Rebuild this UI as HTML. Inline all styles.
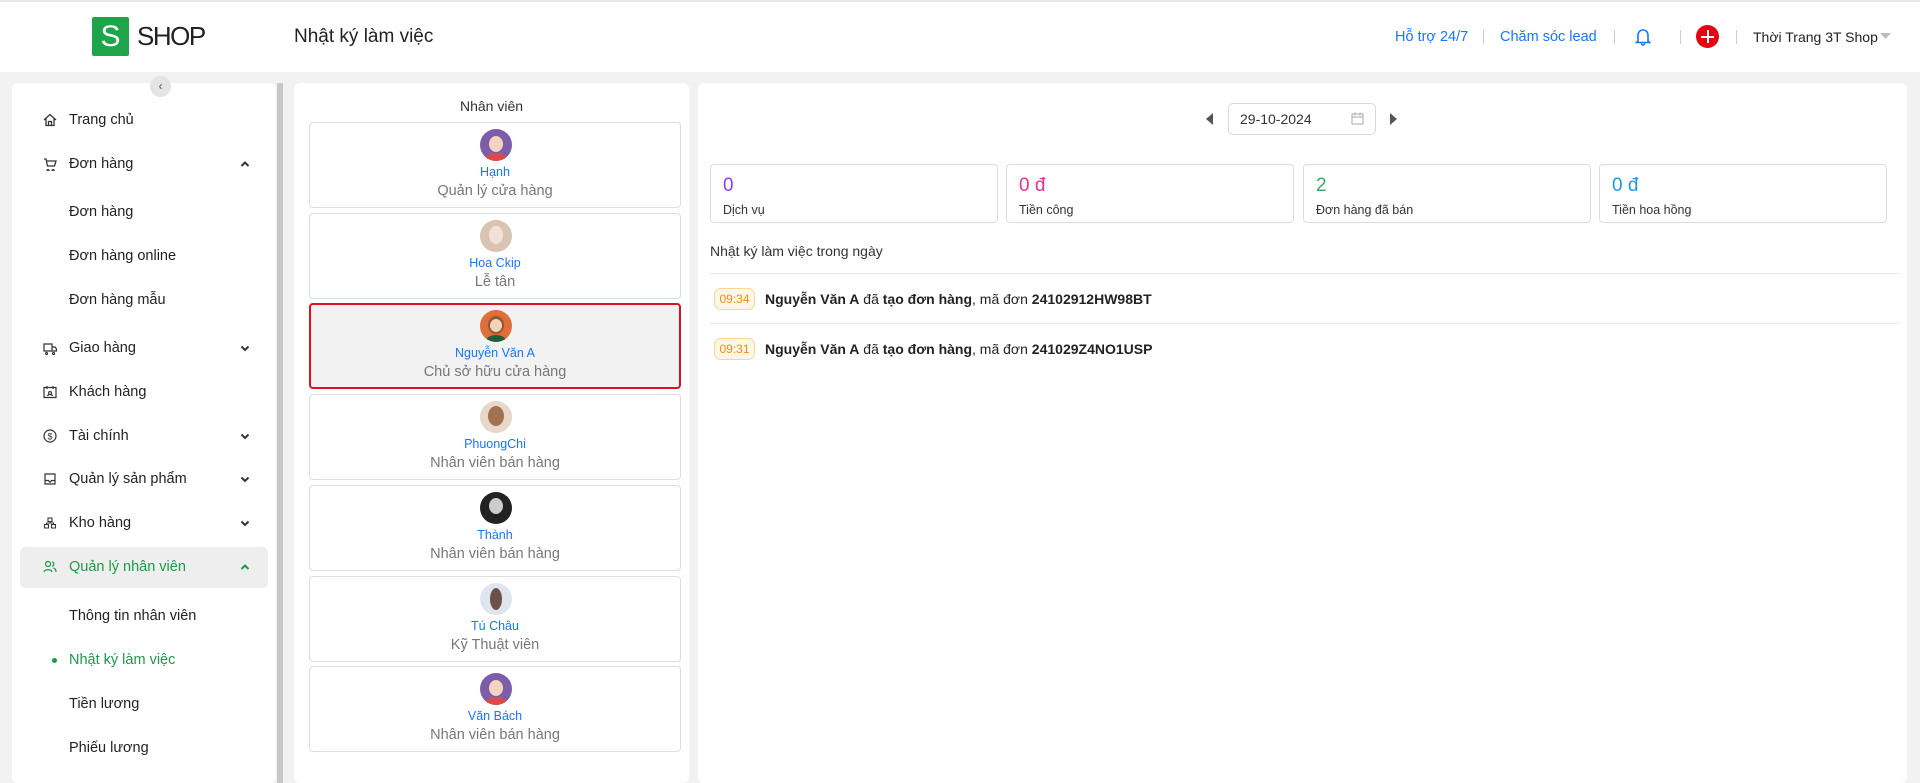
<!DOCTYPE html>
<html><head><meta charset="utf-8">
<style>
*{box-sizing:border-box;margin:0;padding:0}
body{width:1920px;height:763px;overflow:hidden;background:#f2f2f2;font-family:"Liberation Sans",sans-serif;color:#222;position:relative}
.abs{position:absolute}
.hdr{left:0;top:0;width:1920px;height:72px;background:#fff;border-top:2px solid #e8e8e8}
.logo{left:92px;top:17px;width:37px;height:39px;background:#1ea54a;border-radius:2px;color:#fff;font-size:30px;text-align:center;line-height:39px}
.shop{left:137px;top:21px;font-size:26px;color:#222;letter-spacing:-1.5px}
.title{left:294px;top:26px;font-size:19px;color:#222}
.hl{top:29px;font-size:14.5px;color:#1677ff}
.sep{top:30px;width:1px;height:14px;background:#ccc}
.side{left:12px;top:83px;width:264px;height:700px;background:#fff;border-radius:6px}
.sb{left:277px;top:83px;width:6px;height:700px;background:#c8c8c8}
.col{left:150px;top:76px;width:21px;height:21px;border-radius:50%;background:#e4e4e4;font-size:12px;text-align:center;line-height:20px;color:#555}
.mi{left:69px;font-size:14.5px;color:#222;transform:translateY(-50%)}
.ic{left:43px;width:14px;height:14px;transform:translateY(-50%)}
.chev{left:239px;width:12px;height:12px;transform:translateY(-50%)}
.mid{left:294px;top:83px;width:395px;height:700px;background:#fff;border-radius:6px}
.card{left:309px;width:372px;height:86px;border:1px solid #ddd;border-radius:4px;background:#fff;text-align:center}
.card.sel{border:2px solid #d9141c;background:#f2f2f2}
.av{position:absolute;left:170px;top:6px;width:32px;height:32px;border-radius:50%;overflow:hidden}
.nm{position:absolute;left:0;right:0;top:42px;font-size:12.5px;color:#1677ff}
.rl{position:absolute;left:0;right:0;top:60px;font-size:14.5px;color:#777}
.right{left:698px;top:83px;width:1209px;height:700px;background:#fff;border-radius:6px}
.stat{top:164px;width:288px;height:59px;border:1px solid #ddd;border-radius:4px;background:#fff}
.stat .v{position:absolute;left:12px;top:10px;font-size:19px}
.stat .l{position:absolute;left:12px;top:38px;font-size:12.5px;color:#333}
.badge{left:714px;width:41px;height:22px;border:1px solid #ffd591;background:#fff7e6;color:#fa8c16;border-radius:7px;font-size:12px;text-align:center;line-height:20px}
.ent{left:765px;font-size:14px;color:#222}
.hr{left:710px;width:1190px;height:1px;background:#e8e8e8}
</style></head><body>
<div class="abs hdr"></div>
<div class="abs logo">S</div>
<div class="abs shop">SHOP</div>
<div class="abs title">Nhật ký làm việc</div>
<div class="abs hl" style="left:1395px">Hỗ trợ 24/7</div>
<div class="abs sep" style="left:1483px"></div>
<div class="abs hl" style="left:1500px">Chăm sóc lead</div>
<div class="abs sep" style="left:1614px"></div>
<svg class="abs" style="left:1635px;top:27px" width="16" height="19" viewBox="0 0 16 19"><path d="M3 14V8a5 5 0 0 1 10 0v6l1.5 1.5h-13z M6.5 16.5a1.5 1.5 0 0 0 3 0" fill="none" stroke="#1677ff" stroke-width="1.6"/></svg>
<div class="abs sep" style="left:1680px"></div>
<div class="abs" style="left:1696px;top:25px;width:23px;height:23px;border-radius:50%;background:#e60012"></div>
<div class="abs" style="left:1701px;top:35.5px;width:13px;height:2px;background:#fff"></div>
<div class="abs" style="left:1706.5px;top:30px;width:2px;height:13px;background:#fff"></div>
<div class="abs sep" style="left:1736px"></div>
<div class="abs" style="left:1753px;top:29px;font-size:14px;color:#222">Thời Trang 3T Shop</div>
<svg class="abs" style="left:1880px;top:33px" width="11" height="7"><path d="M0 0h11L5.5 6z" fill="#bbb"/></svg>

<div class="abs side"></div>
<div class="abs sb"></div>
<div class="abs col">&#8249;</div>

<svg class="abs ic" style="top:120px" viewBox="0 0 14 14"><path d="M1 7L7 1.5 13 7M3 5.5V12.5h8V5.5M5.5 12.5v-4h3v4" fill="none" stroke="#333" stroke-width="1.3"/></svg>
<div class="abs mi" style="top:120px">Trang chủ</div>
<svg class="abs ic" style="top:164px" viewBox="0 0 14 14"><path d="M1 2h2l1.5 7h7L13 4H4M5 12.5a1 1 0 1 0 .1 0M10 12.5a1 1 0 1 0 .1 0" fill="none" stroke="#333" stroke-width="1.3"/></svg>
<div class="abs mi" style="top:164px">Đơn hàng</div>
<svg class="abs chev" style="top:164px" viewBox="0 0 12 12"><path d="M2.5 8L6 4.5 9.5 8" fill="none" stroke="#333" stroke-width="2"/></svg>
<div class="abs mi" style="top:212px">Đơn hàng</div>
<div class="abs mi" style="top:256px">Đơn hàng online</div>
<div class="abs mi" style="top:300px">Đơn hàng mẫu</div>
<svg class="abs ic" style="top:348px" viewBox="0 0 14 14"><path d="M1 3h8v7H1zM9 6h3l1.5 2v2H9M3.5 11.5a1 1 0 1 0 .1 0M10.5 11.5a1 1 0 1 0 .1 0" fill="none" stroke="#333" stroke-width="1.2"/></svg>
<div class="abs mi" style="top:348px">Giao hàng</div>
<svg class="abs chev" style="top:348px" viewBox="0 0 12 12"><path d="M2.5 4.5L6 8 9.5 4.5" fill="none" stroke="#333" stroke-width="2"/></svg>
<svg class="abs ic" style="top:392px" viewBox="0 0 14 14"><path d="M1 2.5h12v10H1zM4 1v3M10 1v3M7 6.5a1.5 1.5 0 1 0 .1 0M4.5 11c.5-2 4.5-2 5 0" fill="none" stroke="#333" stroke-width="1.2"/></svg>
<div class="abs mi" style="top:392px">Khách hàng</div>
<svg class="abs ic" style="top:436px" viewBox="0 0 14 14"><circle cx="7" cy="7" r="6" fill="none" stroke="#333" stroke-width="1.2"/><text x="7" y="10.5" font-size="9" text-anchor="middle" fill="#333" font-family="Liberation Sans">$</text></svg>
<div class="abs mi" style="top:436px">Tài chính</div>
<svg class="abs chev" style="top:436px" viewBox="0 0 12 12"><path d="M2.5 4.5L6 8 9.5 4.5" fill="none" stroke="#333" stroke-width="2"/></svg>
<svg class="abs ic" style="top:479px" viewBox="0 0 14 14"><path d="M2 2h10v10H2zM2 8.5h3.5l1 1.5h1l1-1.5H12" fill="none" stroke="#333" stroke-width="1.2"/></svg>
<div class="abs mi" style="top:479px">Quản lý sản phẩm</div>
<svg class="abs chev" style="top:479px" viewBox="0 0 12 12"><path d="M2.5 4.5L6 8 9.5 4.5" fill="none" stroke="#333" stroke-width="2"/></svg>
<svg class="abs ic" style="top:523px" viewBox="0 0 14 14"><path d="M5 2h4v3.5H5zM1.5 8.5h4V12h-4zM8.5 8.5h4V12h-4zM7 5.5v1.5M3.5 8.5V7h7v1.5" fill="none" stroke="#333" stroke-width="1.1"/></svg>
<div class="abs mi" style="top:523px">Kho hàng</div>
<svg class="abs chev" style="top:523px" viewBox="0 0 12 12"><path d="M2.5 4.5L6 8 9.5 4.5" fill="none" stroke="#333" stroke-width="2"/></svg>
<div class="abs" style="left:20px;top:547px;width:248px;height:41px;background:#eeeeee;border-radius:5px"></div>
<svg class="abs ic" style="top:567px" viewBox="0 0 14 14"><path d="M5 1.5a2.5 2.5 0 1 0 .1 0M1 12c.5-3 7.5-3 8 0M9 1.8a2.3 2.3 0 0 1 0 4.5M10.5 8c1.5.5 2.5 2 2.5 4" fill="none" stroke="#1a9a4a" stroke-width="1.2"/></svg>
<div class="abs mi" style="top:567px;color:#1a9a4a">Quản lý nhân viên</div>
<svg class="abs chev" style="top:567px" viewBox="0 0 12 12"><path d="M2.5 8L6 4.5 9.5 8" fill="none" stroke="#1a9a4a" stroke-width="2"/></svg>
<div class="abs mi" style="top:616px">Thông tin nhân viên</div>
<div class="abs" style="left:52px;top:658px;width:5px;height:5px;border-radius:50%;background:#1a9a4a"></div>
<div class="abs mi" style="top:660px;color:#1a9a4a">Nhật ký làm việc</div>
<div class="abs mi" style="top:704px">Tiền lương</div>
<div class="abs mi" style="top:748px">Phiếu lương</div>

<div class="abs mid"></div>
<div class="abs" style="left:294px;width:395px;top:98px;text-align:center;font-size:14px;color:#333">Nhân viên</div>

<div class="abs card" style="top:122px"><div class="av" style="background:#7b5ea7"><div style="position:absolute;left:9px;top:7px;width:14px;height:16px;border-radius:50%;background:#f6d3c0"></div><div style="position:absolute;left:5px;top:24px;width:22px;height:14px;border-radius:50%;background:#e04848"></div></div><div class="nm">Hạnh</div><div class="rl">Quản lý cửa hàng</div></div>
<div class="abs card" style="top:213px"><div class="av" style="background:#d9c3b3"><div style="position:absolute;left:9px;top:6px;width:14px;height:18px;border-radius:50%;background:#f3e1d5"></div></div><div class="nm">Hoa Ckip</div><div class="rl">Lễ tân</div></div>
<div class="abs card sel" style="top:303px"><div class="av" style="left:169px;top:5px;background:#e06d3a"><div style="position:absolute;left:8px;top:6px;width:16px;height:18px;border-radius:50%;background:#8a5a2e"></div><div style="position:absolute;left:10px;top:9px;width:12px;height:13px;border-radius:50%;background:#f6d3b8"></div><div style="position:absolute;left:6px;top:25px;width:20px;height:12px;border-radius:50%;background:#1f5e3b"></div></div><div class="nm" style="top:41px">Nguyễn Văn A</div><div class="rl" style="top:59px">Chủ sở hữu cửa hàng</div></div>
<div class="abs card" style="top:394px"><div class="av" style="background:#e8d8cc"><div style="position:absolute;left:8px;top:5px;width:16px;height:20px;border-radius:50%;background:#a0724f"></div></div><div class="nm">PhuongChi</div><div class="rl">Nhân viên bán hàng</div></div>
<div class="abs card" style="top:485px"><div class="av" style="background:#222"><div style="position:absolute;left:9px;top:6px;width:14px;height:16px;border-radius:50%;background:#ccc"></div></div><div class="nm">Thành</div><div class="rl">Nhân viên bán hàng</div></div>
<div class="abs card" style="top:576px"><div class="av" style="background:#dfe5ee"><div style="position:absolute;left:10px;top:5px;width:12px;height:22px;border-radius:50%;background:#6b5148"></div></div><div class="nm">Tú Châu</div><div class="rl">Kỹ Thuật viên</div></div>
<div class="abs card" style="top:666px"><div class="av" style="background:#7b5ea7"><div style="position:absolute;left:9px;top:7px;width:14px;height:16px;border-radius:50%;background:#f6d3c0"></div><div style="position:absolute;left:5px;top:24px;width:22px;height:14px;border-radius:50%;background:#e04848"></div></div><div class="nm">Văn Bách</div><div class="rl">Nhân viên bán hàng</div></div>

<div class="abs right"></div>
<svg class="abs" style="left:1206px;top:113px" width="8" height="12"><path d="M7 0v12L0 6z" fill="#555"/></svg>
<div class="abs" style="left:1228px;top:103px;width:148px;height:32px;border:1px solid #d9d9d9;border-radius:5px;background:#fff"></div>
<div class="abs" style="left:1240px;top:111px;font-size:14px;color:#333">29-10-2024</div>
<svg class="abs" style="left:1351px;top:112px" width="13" height="13" viewBox="0 0 13 13"><path d="M1 2h11v10H1zM1 5h11M4 0.5v3M9 0.5v3" fill="none" stroke="#aaa" stroke-width="1"/></svg>
<svg class="abs" style="left:1389px;top:113px" width="8" height="12"><path d="M1 0v12L8 6z" fill="#555"/></svg>

<div class="abs stat" style="left:710px"><div class="v" style="color:#8a3ffc">0</div><div class="l">Dịch vụ</div></div>
<div class="abs stat" style="left:1006px"><div class="v" style="color:#eb2f96">0 đ</div><div class="l">Tiền công</div></div>
<div class="abs stat" style="left:1303px"><div class="v" style="color:#3aa86b">2</div><div class="l">Đơn hàng đã bán</div></div>
<div class="abs stat" style="left:1599px"><div class="v" style="color:#1a9be6">0 đ</div><div class="l">Tiền hoa hồng</div></div>

<div class="abs" style="left:710px;top:243px;font-size:14px;color:#333">Nhật ký làm việc trong ngày</div>
<div class="abs hr" style="top:273px"></div>
<div class="abs badge" style="top:288px">09:34</div>
<div class="abs ent" style="top:291px"><b>Nguyễn Văn A</b> đã <b>tạo đơn hàng</b>, mã đơn <b>24102912HW98BT</b></div>
<div class="abs hr" style="top:323px"></div>
<div class="abs badge" style="top:338px">09:31</div>
<div class="abs ent" style="top:341px"><b>Nguyễn Văn A</b> đã <b>tạo đơn hàng</b>, mã đơn <b>241029Z4NO1USP</b></div>
</body></html>
